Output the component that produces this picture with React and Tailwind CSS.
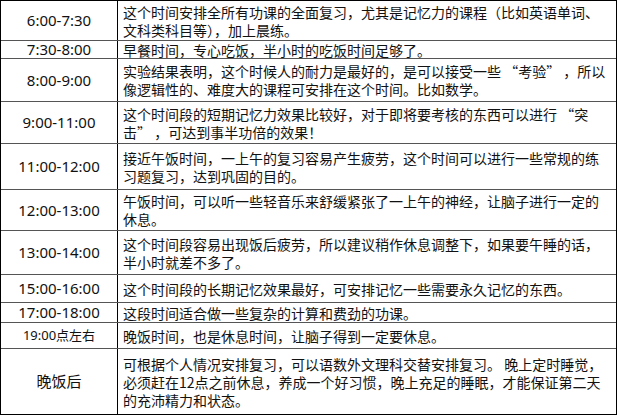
const ROWS = [
	{ time: '6:00-7:30', h: 'h-[39px]', lines: ['这个时间安排全所有功课的全面复习，尤其是记忆力的课程（比如英语单词、', '文科类科目等），加上晨练。'] },
	{ time: '7:30-8:00', h: 'h-[18px]', lines: ['早餐时间，专心吃饭，半小时的吃饭时间足够了。'] },
	{ time: '8:00-9:00', h: 'h-[43px]', lines: ['实验结果表明，这个时候人的耐力是最好的，是可以接受一些 “考验” ，所以', '像逻辑性的、难度大的课程可安排在这个时间。比如数学。'] },
	{ time: '9:00-11:00', h: 'h-[42px]', lines: ['这个时间段的短期记忆力效果比较好，对于即将要考核的东西可以进行 “突', '击” ，可达到事半功倍的效果！'] },
	{ time: '11:00-12:00', h: 'h-[46px]', lines: ['接近午饭时间，一上午的复习容易产生疲劳，这个时间可以进行一些常规的练', '习题复习，达到巩固的目的。'] },
	{ time: '12:00-13:00', h: 'h-[41px]', lines: ['午饭时间，可以听一些轻音乐来舒缓紧张了一上午的神经，让脑子进行一定的', '休息。'] },
	{ time: '13:00-14:00', h: 'h-[44px]', lines: ['这个时间段容易出现饭后疲劳，所以建议稍作休息调整下，如果要午睡的话，', '半小时就差不多了。'] },
	{ time: '15:00-16:00', h: 'h-[28px]', lines: ['这个时间段的长期记忆效果最好，可安排记忆一些需要永久记忆的东西。'] },
	{ time: '17:00-18:00', h: 'h-[20px]', lines: ['这段时间适合做一些复杂的计算和费劲的功课。'] },
	{ time: '19:00点左右', h: 'h-[26px]', small: true, lines: ['晚饭时间，也是休息时间，让脑子得到一定要休息。'] },
	{ time: '晚饭后', h: 'h-[66px]', lines: ['可根据个人情况安排复习，可以语数外文理科交替安排复习。 晚上定时睡觉，', '必须赶在12点之前休息，养成一个好习惯，晚上充足的睡眠，才能保证第二天', '的充沛精力和状态。'] },
];

const App = () => {
	return (
		<div className="w-[620px] h-[416px] bg-white">
			<div className="w-[617px] h-[415px] border border-black flex flex-col text-[#111]">
				{ROWS.map((row, rowIndex) => {
					return (
						<div
							key={rowIndex}
							className={`flex ${row.h} ${rowIndex > 0 ? 'border-t border-[#555]' : ''}`}
						>
							<div
								className={`w-[117px] shrink-0 border-r border-black flex items-center justify-center font-['Noto_Sans','Noto_Sans_CJK_SC',sans-serif] ${
									row.small ? 'text-[13px]' : 'text-[15px]'
								}`}
							>
								{row.time}
							</div>
							<div className="flex-1 flex items-center pl-[5px] font-['Noto_Sans_CJK_SC',sans-serif] text-[14px] leading-[18px]">
								<div>
									{row.lines.map((line, lineIndex) => (
										<div key={lineIndex} className="whitespace-nowrap">
											{line}
										</div>
									))}
								</div>
							</div>
						</div>
					);
				})}
			</div>
		</div>
	);
};

export default App;
